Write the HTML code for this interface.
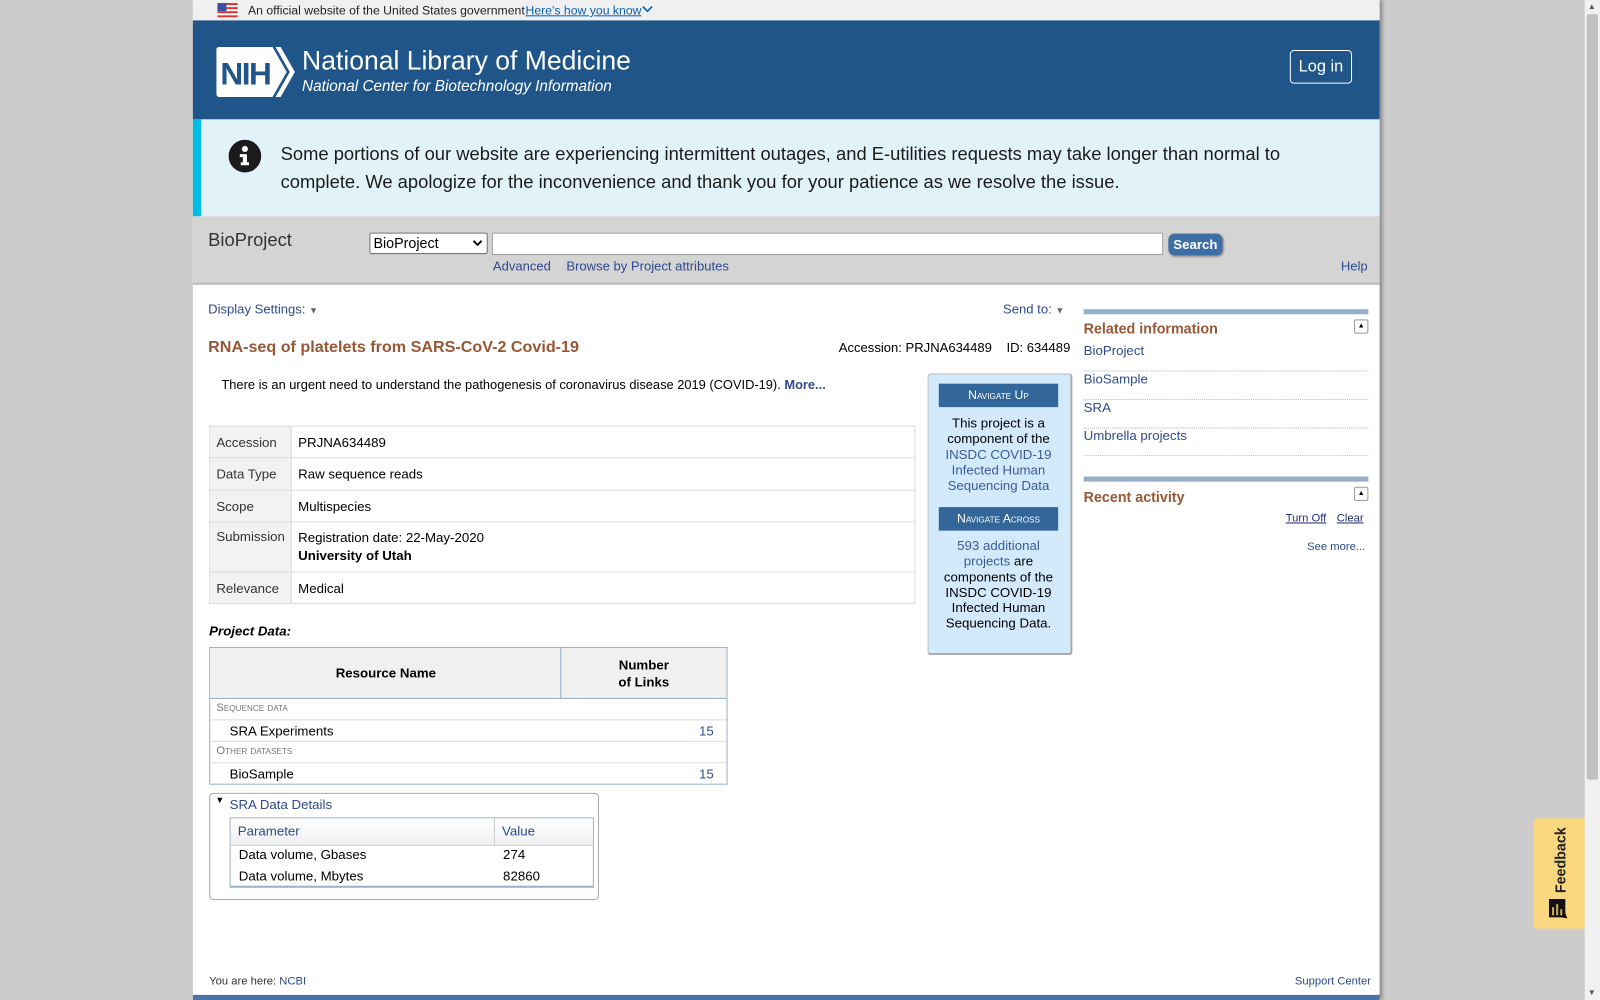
<!DOCTYPE html>
<html><head><meta charset="utf-8">
<style>
html,body{margin:0;padding:0;width:1600px;height:1000px;overflow:hidden;background:#cccccc;font-family:"Liberation Sans",Arial,sans-serif;}
#w{position:absolute;left:0;top:0;width:1568px;height:980px;transform:scale(1.020408);transform-origin:0 0;}
.a{position:absolute;white-space:nowrap;}
.lk{color:#2f4a8e;}
#page{position:absolute;left:189px;top:0;width:1163px;height:980px;background:#fff;box-shadow:3px 0 4px rgba(0,0,0,.35);}
table{border-collapse:collapse;}
td{box-sizing:border-box;}
.nb{position:absolute;left:920px;width:117px;height:23px;background:#336699;color:#fff;font-size:12px;font-variant:small-caps;text-align:center;line-height:23px;}
.nt{position:absolute;left:920px;width:117px;text-align:center;font-size:13px;line-height:15.3px;color:#000;white-space:normal;}
.rl{position:absolute;left:1062px;width:279px;font-size:13px;color:#2f4a8e;border-bottom:1px dotted #bbb;height:27px;line-height:16px;}
</style></head><body><div id="w">
<div id="page"></div>
<div class="a" style="left:189px;top:0;width:1163px;height:20px;background:#f0f0f0;"></div>
<svg class="a" style="left:213px;top:3px" width="20" height="14" viewBox="0 0 20 14"><rect width="20" height="14" fill="#fff"/><g fill="#d33"><rect y="0" width="20" height="2"/><rect y="4" width="20" height="2"/><rect y="8" width="20" height="2"/><rect y="12" width="20" height="2"/></g><rect width="9" height="8" fill="#3d4fa0"/></svg>
<div class="a" style="left:243px;top:3px;font-size:12px;color:#222;">An official website of the United States government</div>
<div class="a" style="left:515px;top:3px;font-size:12px;color:#0b62b5;text-decoration:underline;">Here's how you know</div>
<svg class="a" style="left:629px;top:5px" width="11" height="8"><path d="M1 1.5L5.5 6L10 1.5" stroke="#0b62b5" stroke-width="1.6" fill="none"/></svg>
<div class="a" style="left:189px;top:20px;width:1163px;height:97px;background:#20558a;"></div>
<svg class="a" style="left:212px;top:46px" width="78" height="49" viewBox="0 0 78 49"><path d="M3 0H55L69 24.5L55 49H3Q0 49 0 46V3Q0 0 3 0Z" fill="#fff"/><path d="M58 0H63L77 24.5L63 49H58L72 24.5Z" fill="#fff"/><text x="4" y="37" font-family="Liberation Sans,Arial" font-size="31" font-weight="bold" fill="#20558a" letter-spacing="-1.5">NIH</text></svg>
<div class="a" style="left:296px;top:44px;font-size:26px;color:#fff;">National Library of Medicine</div>
<div class="a" style="left:296px;top:76px;font-size:15px;color:#fff;font-style:italic;">National Center for Biotechnology Information</div>
<div class="a" style="left:1264px;top:49px;width:59px;height:31px;border:1px solid #fff;border-radius:4px;color:#fff;font-size:16px;text-align:center;line-height:31px;">Log in</div>
<div class="a" style="left:189px;top:117px;width:1163px;height:95px;background:#e1f3f8;"></div>
<div class="a" style="left:189px;top:117px;width:8px;height:95px;background:#00bde3;"></div>
<svg class="a" style="left:224px;top:137px" width="32" height="32" viewBox="0 0 32 32"><circle cx="16" cy="16" r="16" fill="#1b1b1b"/><circle cx="16" cy="9" r="3" fill="#fff"/><path d="M11 14H18V22H20V25H12V22H14V17H11Z" fill="#fff"/></svg>
<div class="a" style="left:275px;top:138px;font-size:18px;line-height:27px;color:#1b1b1b;white-space:normal;width:1000px;">Some portions of our website are experiencing intermittent outages, and E-utilities requests may take longer than normal to complete. We apologize for the inconvenience and thank you for your patience as we resolve the issue.</div>
<div class="a" style="left:189px;top:212px;width:1163px;height:65px;background:#d4d4d4;border-bottom:2px solid #bbb;"></div>
<div class="a" style="left:204px;top:225px;font-size:18px;color:#333;">BioProject</div>
<div class="a" style="left:362px;top:228px;width:114px;height:19px;background:#fff;border:1px solid #767676;border-radius:2px;font-size:14px;line-height:19px;text-indent:3px;">BioProject<svg style="position:absolute;right:4px;top:6px" width="10" height="7"><path d="M1 1L5 5L9 1" stroke="#000" stroke-width="1.8" fill="none"/></svg></div>
<div class="a" style="left:482px;top:228px;width:656px;height:20px;background:#fff;border:1px solid #999;"></div>
<div class="a" style="left:1145px;top:229px;width:53px;height:21px;background:#3d6fa6;border-radius:6px;color:#fff;font-size:13px;font-weight:bold;text-align:center;line-height:21px;box-shadow:1px 1px 2px #777;">Search</div>
<div class="a lk" style="left:483px;top:253px;font-size:12.8px;">Advanced</div>
<div class="a lk" style="left:555px;top:253px;font-size:12.8px;">Browse by Project attributes</div>
<div class="a lk" style="left:1314px;top:253px;font-size:12.8px;">Help</div>
<div class="a lk" style="left:204px;top:295px;font-size:12.8px;">Display Settings: <span style="font-size:9px;color:#666">▼</span></div>
<div class="a lk" style="left:983px;top:295px;font-size:12.8px;">Send to: <span style="font-size:9px;color:#666">▼</span></div>
<div class="a" style="left:204px;top:332px;font-size:15.8px;font-weight:bold;color:#985735;">RNA-seq of platelets from SARS-CoV-2 Covid-19</div>
<div class="a" style="left:822px;top:333px;font-size:12.8px;">Accession: PRJNA634489&nbsp;&nbsp;&nbsp;&nbsp;ID: 634489</div>
<div class="a" style="left:217px;top:370px;font-size:12.6px;">There is an urgent need to understand the pathogenesis of coronavirus disease 2019 (COVID-19). <b class="lk">More...</b></div>
<table class="a" style="left:205px;top:417px;width:692px;font-size:13px;">
<tr style="height:31px"><td style="width:80px;background:#f2f2f2;border:1px solid #ddd;padding:0 6px;color:#333">Accession</td><td style="border:1px solid #ddd;padding:0 6px">PRJNA634489</td></tr>
<tr style="height:32px"><td style="background:#f2f2f2;border:1px solid #ddd;padding:0 6px;color:#333">Data Type</td><td style="border:1px solid #ddd;padding:0 6px">Raw sequence reads</td></tr>
<tr style="height:31px"><td style="background:#f2f2f2;border:1px solid #ddd;padding:0 6px;color:#333">Scope</td><td style="border:1px solid #ddd;padding:0 6px">Multispecies</td></tr>
<tr style="height:49px"><td style="background:#f2f2f2;border:1px solid #ddd;padding:6px 6px 0;color:#333;vertical-align:top">Submission</td><td style="border:1px solid #ddd;padding:6px 6px 0;vertical-align:top;line-height:18px">Registration date: 22-May-2020<br><b>University of Utah</b></td></tr>
<tr style="height:31px"><td style="background:#f2f2f2;border:1px solid #ddd;padding:0 6px;color:#333">Relevance</td><td style="border:1px solid #ddd;padding:0 6px">Medical</td></tr>
</table>
<div class="a" style="left:205px;top:611px;font-size:13px;font-weight:bold;font-style:italic;">Project Data:</div>
<div class="a" style="left:205px;top:634px;width:506px;height:133px;border:1px solid #97b0c8;"></div>
<div class="a" style="left:206px;top:635px;width:506px;height:49px;background:#f0f0f0;border-bottom:1px solid #97b0c8;"></div>
<div class="a" style="left:549px;top:635px;width:1px;height:49px;background:#97b0c8;"></div>
<div class="a" style="left:329px;top:652px;font-size:13px;font-weight:bold;">Resource Name</div>
<div class="a" style="left:606px;top:643px;font-size:13px;font-weight:bold;text-align:center;line-height:17px;">Number<br>of Links</div>
<div class="a" style="left:212px;top:688px;font-size:11px;color:#777;font-variant:small-caps;">Sequence data</div>
<div class="a" style="left:206px;top:705px;width:506px;height:1px;background:#ddd;"></div>
<div class="a" style="left:225px;top:709px;font-size:13px;">SRA Experiments</div>
<div class="a lk" style="left:685px;top:709px;font-size:13px;">15</div>
<div class="a" style="left:206px;top:726px;width:506px;height:1px;background:#ddd;"></div>
<div class="a" style="left:212px;top:730px;font-size:11px;color:#777;font-variant:small-caps;">Other datasets</div>
<div class="a" style="left:206px;top:747px;width:506px;height:1px;background:#ddd;"></div>
<div class="a" style="left:225px;top:751px;font-size:13px;">BioSample</div>
<div class="a lk" style="left:685px;top:751px;font-size:13px;">15</div>
<div class="a" style="left:205px;top:777px;width:380px;height:103px;border:1px solid #aaa;border-radius:4px;"></div>
<div class="a" style="left:211px;top:779px;font-size:9px;">▼</div>
<div class="a lk" style="left:225px;top:781px;font-size:13px;">SRA Data Details</div>
<div class="a" style="left:225px;top:801px;width:355px;height:66px;border:1px solid #97b0c8;border-bottom-width:2px;"></div>
<div class="a" style="left:226px;top:802px;width:355px;height:26px;background:linear-gradient(#fff,#f0f0f0);border-bottom:1px solid #c8d4e0;"></div>
<div class="a" style="left:484px;top:802px;width:1px;height:26px;background:#ccc;"></div>
<div class="a lk" style="left:233px;top:807px;font-size:13px;">Parameter</div>
<div class="a lk" style="left:492px;top:807px;font-size:13px;">Value</div>
<div class="a" style="left:234px;top:830px;font-size:13px;">Data volume, Gbases</div>
<div class="a" style="left:493px;top:830px;font-size:13px;">274</div>
<div class="a" style="left:234px;top:851px;font-size:13px;">Data volume, Mbytes</div>
<div class="a" style="left:493px;top:851px;font-size:13px;">82860</div>
<div class="a" style="left:909px;top:366px;width:139px;height:273px;background:#d3eafc;border:1px solid #bbb;border-right:2px solid #aaa;border-bottom:2px solid #aaa;border-radius:3px;"></div>
<div class="nb" style="top:376px;">Navigate Up</div>
<div class="nt" style="top:407px;">This project is a component of the <span style="color:#3b5c99">INSDC COVID-19 Infected Human Sequencing Data</span></div>
<div class="nb" style="top:497px;">Navigate Across</div>
<div class="nt" style="top:527px;"><span style="color:#3b5c99">593 additional projects</span> are components of the INSDC COVID-19 Infected Human Sequencing Data.</div>
<div class="a" style="left:1062px;top:303px;width:279px;height:5px;background:#97b0c8;"></div>
<div class="a" style="left:1062px;top:314px;font-size:14px;font-weight:bold;color:#985735;">Related information</div>
<div class="a" style="left:1327px;top:313px;width:12px;height:12px;border:1px solid #999;border-radius:2px;background:#fff;font-size:7px;text-align:center;line-height:11px;">▲</div>
<div class="rl" style="top:336px;">BioProject</div>
<div class="rl" style="top:364px;">BioSample</div>
<div class="rl" style="top:392px;">SRA</div>
<div class="rl" style="top:419px;">Umbrella projects</div>
<div class="a" style="left:1062px;top:467px;width:279px;height:5px;background:#97b0c8;"></div>
<div class="a" style="left:1062px;top:479px;font-size:14px;font-weight:bold;color:#985735;">Recent activity</div>
<div class="a" style="left:1327px;top:477px;width:12px;height:12px;border:1px solid #999;border-radius:2px;background:#fff;font-size:7px;text-align:center;line-height:11px;">▲</div>
<div class="a" style="left:1260px;top:502px;font-size:11px;color:#222a6f;text-decoration:underline;">Turn Off</div>
<div class="a" style="left:1310px;top:502px;font-size:11px;color:#222a6f;text-decoration:underline;">Clear</div>
<div class="a lk" style="left:1281px;top:530px;font-size:11px;">See more...</div>
<div class="a" style="left:205px;top:956px;font-size:11px;color:#333;">You are here: <span class="lk">NCBI</span></div>
<div class="a lk" style="left:1269px;top:956px;font-size:11px;">Support Center</div>
<div class="a" style="left:189px;top:975px;width:1163px;height:5px;background:#4a73a8;"></div>
<div class="a" style="left:1503px;top:802px;width:52px;height:108px;background:#f9d77e;border-radius:3px 0 0 3px;"></div>
<div class="a" style="left:1489px;top:835px;font-size:14px;font-weight:bold;color:#222;transform:rotate(-90deg);transform-origin:center;width:80px;text-align:center;">Feedback</div>
<svg class="a" style="left:1518px;top:881px" width="18" height="20" viewBox="0 0 18 20"><rect x="0" y="0" width="16" height="18" fill="#111"/><path d="M16 14L18 19L12 18Z" fill="#111"/><rect x="3" y="8" width="2" height="8" fill="#c9a95a"/><rect x="7" y="5" width="2" height="11" fill="#c9a95a"/><rect x="11" y="10" width="2" height="6" fill="#c9a95a"/></svg>
<div class="a" style="left:1553px;top:0;width:15px;height:980px;background:#f1f1f1;"></div>
<div class="a" style="left:1555px;top:14px;width:11px;height:750px;background:#c1c1c1;border-radius:2px;"></div>
<div class="a" style="left:1556px;top:2px;font-size:8px;color:#555;">▲</div>
<div class="a" style="left:1556px;top:968px;font-size:8px;color:#555;">▼</div>
</div></body></html>
